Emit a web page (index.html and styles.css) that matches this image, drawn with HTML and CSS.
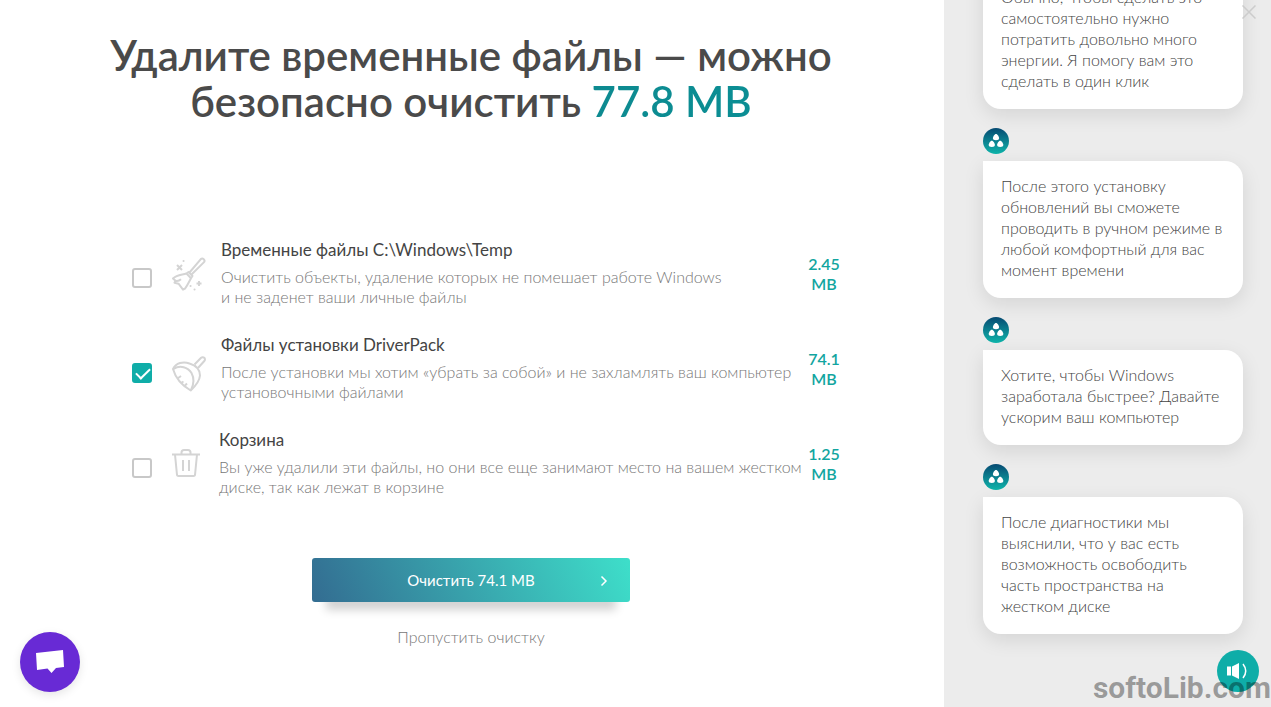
FILE: index.html
```html
<!DOCTYPE html>
<html lang="ru">
<head>
    <meta charset="utf-8">
    <title>DriverPack</title>
    <link rel="stylesheet" href="styles.css">
</head>
<body>
    <svg class="defs" aria-hidden="true">
        <defs>
            <linearGradient id="logoFill" x1="0" y1="0" x2="0" y2="1">
                <stop offset="0" stop-color="#064a72"/>
                <stop offset="1" stop-color="#0fb5ab"/>
            </linearGradient>
            <symbol id="logo" viewBox="0 0 26 26">
                <circle cx="13" cy="13" r="13" fill="url(#logoFill)"/>
                <g fill="#fff">
                    <path id="drop" d="M13 6c1.500 0 3.100 2.700 3.100 4.200 0 1.300-1 2-3.100 2s-3.100-.7-3.100-2C9.900 8.700 11.500 6 13 6z"/>
                    <use href="#drop" x="-4.200" y="6.800"/>
                    <use href="#drop" x="4.200" y="6.800"/>
                </g>
            </symbol>
        </defs>
    </svg>

    <main class="content">
        <h1>Удалите временные файлы — можно<br>безопасно очистить <span class="accent">77.8 MB</span></h1>
        <form id="cleanForm">
            <div class="item">
                <input type="checkbox" id="temp">
                <svg class="icon" width="34" height="34" viewBox="0 0 34 34">
                    <path d="M17.500 15.500 28.600 2.300a2.200 2.200 0 0 1 3.200 3.100L19.500 17.500"/>
                    <path d="M14.500 16.500l2-1.500 4 4-1.500 2.200z"/>
                    <path d="M14.500 16.500C10 18 5 17.500 1 21.500l2.500 2.200-1 2 4 1 4.500 6 2-1c2.500-3.500 4-7 6-10.500"/>
                    <path d="M3.500 23.700c2 .5 4-.2 5.500-1.500"/>
                    <path d="M5 8l5 5M10 8l-5 5M27 24v5M24.500 26.500h5"/>
                    <path d="M11.500 4h.1M18.500 29h.1M22.500 32.500h.1" stroke-linecap="round"/>
                </svg>
                <label for="temp">
                    <span class="name">Временные файлы C:\Windows\Temp</span>
                    <span class="desc">Очистить объекты, удаление которых не помешает работе Windows<br>и не заденет ваши личные файлы</span>
                </label>
                <span class="size">2.45 MB</span>
            </div>
            <div class="item">
                <input type="checkbox" id="setup" checked>
                <svg class="icon" width="34" height="50" viewBox="0 -8 34 50">
                    <path d="M22.500 12.500l6.600-6.700a2.200 2.200 0 0 1 3.200 3.200L26 16"/>
                    <path d="M1 17C4 11 11 9 17.500 11.500 24 13.500 28 18 28 23.500c-.5 6-4.500 10.500-9.300 15C11 34 3.500 26 1 17z"/>
                    <path d="M1.500 17C8 12.800 16 15 19.500 21c3 5.500 2.500 11-.5 17"/>
                    <path d="M5.500 26.500l3.500-2.500M9 31l2.500-1.500M12.500 34l2.500-2.500"/>
                </svg>
                <label for="setup">
                    <span class="name">Файлы установки DriverPack</span>
                    <span class="desc">После установки мы хотим «убрать за собой» и не захламлять ваш компьютер<br>установочными файлами</span>
                </label>
                <span class="size">74.1 MB</span>
            </div>
            <div class="item">
                <input type="checkbox" id="trash">
                <svg class="icon" width="32" height="32" viewBox="0 0 32 32">
                    <path d="M0 6.500h28M3 6.500l2 20.500q.2 1 1.500 1h15q1.300 0 1.500-1l2-20.500M9.500 6V4.500Q9.500 2 12 2h4q2.500 0 2.500 2.500V6M11 12v11M17 12v11"/>
                </svg>
                <label for="trash">
                    <span class="name">Корзина</span>
                    <span class="desc">Вы уже удалили эти файлы, но они все еще занимают место на вашем жестком<br>диске, так как лежат в корзине</span>
                </label>
                <span class="size">1.25 MB</span>
            </div>
            <button type="submit" class="clean">Очистить 74.1 MB
                <svg class="arrow" width="8" height="12" viewBox="0 0 8 12"><path d="M1.500 1.500 6 6l-4.500 4.500"/></svg>
            </button>
            <a href="#" class="skip">Пропустить очистку</a>
        </form>
    </main>

    <aside class="chat">
        <p class="bubble">Обычно, чтобы сделать это<br>самостоятельно нужно<br>потратить довольно много<br>энергии. Я помогу вам это<br>сделать в один клик</p>
        <svg class="avatar"><use href="#logo"/></svg>
        <p class="bubble">После этого установку<br>обновлений вы сможете<br>проводить в ручном режиме в<br>любой комфортный для вас<br>момент времени</p>
        <svg class="avatar"><use href="#logo"/></svg>
        <p class="bubble">Хотите, чтобы Windows<br>заработала быстрее? Давайте<br>ускорим ваш компьютер</p>
        <svg class="avatar"><use href="#logo"/></svg>
        <p class="bubble">После диагностики мы<br>выяснили, что у вас есть<br>возможность освободить<br>часть пространства на<br>жестком диске</p>
    </aside>

    <button type="button" class="close" aria-label="Закрыть">
        <svg width="14" height="14" viewBox="0 0 14 14"><path d="M.5.5l13 13M13.500.5l-13 13"/></svg>
    </button>
    <button type="button" class="support" aria-label="Поддержка">
        <svg width="28" height="24" viewBox="0 0 28 24"><path d="M0 3 27 0l1 17-8 1-4.500 5-4-4.500L1 20z" fill="#fff"/></svg>
    </button>
    <button type="button" class="sound" aria-label="Звук">
        <svg width="22" height="18" viewBox="0 0 22 18">
            <path d="M0 4.500h4v9H0zM5 4.500 12 1v16l-7-3.500z" fill="#fff"/>
            <path d="M16 2q5.500 7 0 14" fill="none" stroke="#fff" stroke-width="1.500"/>
        </svg>
    </button>
    <div class="watermark">softoLib.com</div>
</body>
</html>
```
FILE: styles.css
```css
* {
    box-sizing: border-box;
}
body {
    display: flex;
    height: 100vh;
    margin: 0;
    overflow: hidden;
    background: #fff;
    color: #444;
    font-family: Lato, "Open Sans", sans-serif;
    font-size: 16px;
    line-height: 20px;
}
button {
    padding: 0;
    border: none;
    font-family: inherit;
    cursor: pointer;
}
.defs {
    position: absolute;
    width: 0;
    height: 0;
}
.content {
    flex: 1;
    padding: 32px 2px 0 0;
}
h1 {
    margin: 0 0 116px;
    color: #4a4a4a;
    font-size: 42px;
    font-weight: 600;
    line-height: 46px;
    text-align: center;
}
.accent {
    background: linear-gradient(90deg, #0d8a90, #0b8e94);
    background-clip: text;
    color: transparent;
}
#cleanForm {
    display: flex;
    flex-direction: column;
}
.item {
    display: flex;
    align-items: center;
    margin: 0 100px 27px 132px;
}
.item input {
    appearance: none;
    flex: none;
    width: 20px;
    height: 20px;
    margin: 8px 20px 0 0;
    border: 2px solid #c8c8c8;
    border-radius: 3px;
    background: #fff;
}
.item input:checked {
    border-color: #0fada8;
    background: #0fada8;
}
.item input:checked::after {
    content: "";
    display: block;
    width: 12px;
    height: 6px;
    margin: 3px 0 0 2px;
    border: solid #fff;
    border-width: 0 0 2px 2px;
    transform: rotate(-45deg);
}
.icon {
    flex: none;
    margin-right: 15px;
    fill: none;
    stroke: #d4d4d4;
    stroke-width: 2;
    stroke-linejoin: round;
}
.item label {
    flex: 1;
    padding-bottom: 1px;
    white-space: nowrap;
}
.name {
    display: block;
    margin-bottom: 7px;
    font-size: 17px;
    line-height: 20px;
}
.desc {
    display: block;
    color: #777;
    font-weight: 300;
}
.size {
    width: 36px;
    color: #12a5a0;
    font-weight: 600;
    text-align: center;
}
.clean {
    position: relative;
    align-self: center;
    width: 318px;
    height: 44px;
    margin-top: 33px;
    border-radius: 3px;
    background: linear-gradient(65deg, #336c91, #3edfca);
    box-shadow: 0 22px 10px -14px rgba(0, 0, 0, .18);
    color: #fff;
    font-size: 15px;
}
.arrow {
    position: absolute;
    top: 17px;
    right: 22px;
    fill: none;
    stroke: #fff;
    stroke-width: 1.5;
}
.skip {
    align-self: center;
    margin-top: 25px;
    color: #777;
    font-weight: 300;
    text-decoration: none;
}
.chat {
    display: flex;
    flex: none;
    flex-direction: column;
    justify-content: flex-end;
    width: 327px;
    padding: 0 28px 73px 39px;
    background: #ececec;
}
.bubble {
    flex: none;
    margin: 0;
    padding: 14px 18px 18px;
    border-radius: 0 18px 18px 18px;
    background: #fff;
    box-shadow: 0 6px 20px rgba(0, 0, 0, .1);
    font-weight: 300;
    line-height: 21px;
    white-space: nowrap;
}
.avatar {
    flex: none;
    width: 26px;
    height: 26px;
    margin: 19px 0 7px;
}
.close {
    position: absolute;
    top: 5px;
    right: 15px;
    background: none;
    line-height: 0;
}
.close path {
    stroke: #ccc;
    stroke-width: 1.5;
}
.support,
.sound {
    position: absolute;
    display: flex;
    align-items: center;
    justify-content: center;
    border-radius: 50%;
}
.support {
    bottom: 15px;
    left: 20px;
    width: 60px;
    height: 60px;
    background: #682ad5;
    box-shadow: 0 3px 10px rgba(0, 0, 0, .1);
}
.sound {
    right: 12px;
    bottom: 15px;
    width: 42px;
    height: 42px;
    background: #0fada8;
}
.watermark {
    position: absolute;
    right: 0;
    bottom: 4px;
    color: rgba(0, 0, 0, .36);
    font-family: Roboto, sans-serif;
    font-size: 30px;
    font-weight: 700;
    line-height: 30px;
}
```
